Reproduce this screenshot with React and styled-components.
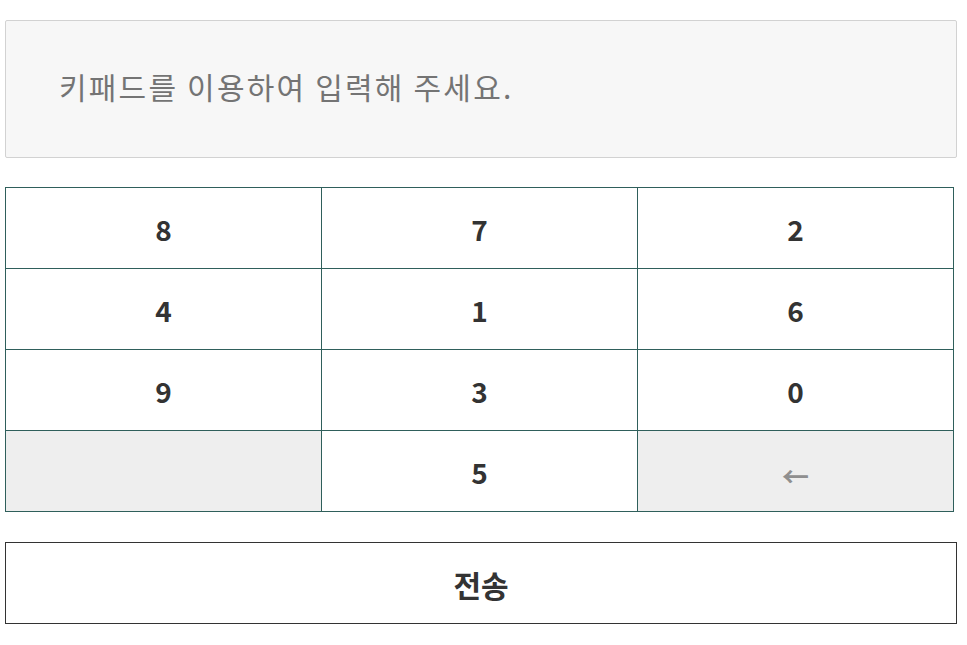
import React from "react";
import styled, { createGlobalStyle } from "styled-components";

const GlobalStyle = createGlobalStyle`
    html, body {
        margin: 0;
        padding: 0;
        background: #fff;
        font-family: "Noto Sans CJK KR", "Noto Sans", sans-serif;
    }
`;

const Page = styled.div`
    width: 952px;
    padding: 20px 0 0 5px;
    display: flex;
    flex-direction: column;
`;

const Display = styled.div`
    height: 138px;
    box-sizing: border-box;
    border: 1px solid #d2d2d2;
    border-radius: 2px;
    background-color: #f7f7f7;
    display: flex;
    align-items: center;
    padding: 0 0 6px 53px;
    font-size: 30px;
    letter-spacing: 2.2px;
    color: #747474;
`;

const Keypad = styled.div`
    margin-top: 29px;
    width: 949px;
    display: grid;
    grid-template-columns: repeat(3, 1fr);
    grid-auto-rows: 81px;
    box-sizing: border-box;
    border-left: 1px solid #2f5f5b;
    border-top: 1px solid #2f5f5b;
`;

const Key = styled.button`
    box-sizing: border-box;
    border: none;
    border-right: 1px solid #2f5f5b;
    border-bottom: 1px solid #2f5f5b;
    background-color: ${(p) => (p.$muted ? "#eeeeee" : "#fff")};
    color: ${(p) => (p.$muted ? "#8f8f8f" : "#333")};
    font-family: "Noto Sans CJK KR", "Noto Sans", sans-serif;
    font-size: ${(p) => (p.$muted ? "27px" : "28px")};
    font-weight: 700;
    padding: ${(p) => (p.$muted ? "8px 0 0" : "2px 0 0")};
    display: flex;
    align-items: center;
    justify-content: center;
    cursor: pointer;
`;

const Submit = styled.button`
    margin-top: 30px;
    height: 82px;
    box-sizing: border-box;
    border: 1px solid #333;
    background: #fff;
    color: #333;
    font-family: "Noto Sans CJK KR", "Noto Sans", sans-serif;
    font-size: 30px;
    font-weight: 700;
    padding: 2px 0 0;
    cursor: pointer;
`;

const keys = ["8", "7", "2", "4", "1", "6", "9", "3", "0"];

export default function App() {
    return (
        <Page>
            <GlobalStyle />
            <Display>키패드를 이용하여 입력해 주세요.</Display>
            <Keypad>
                {keys.map((k) => (
                    <Key key={k}>{k}</Key>
                ))}
                <Key $muted />
                <Key>5</Key>
                <Key $muted>←</Key>
            </Keypad>
            <Submit>전송</Submit>
        </Page>
    );
}
